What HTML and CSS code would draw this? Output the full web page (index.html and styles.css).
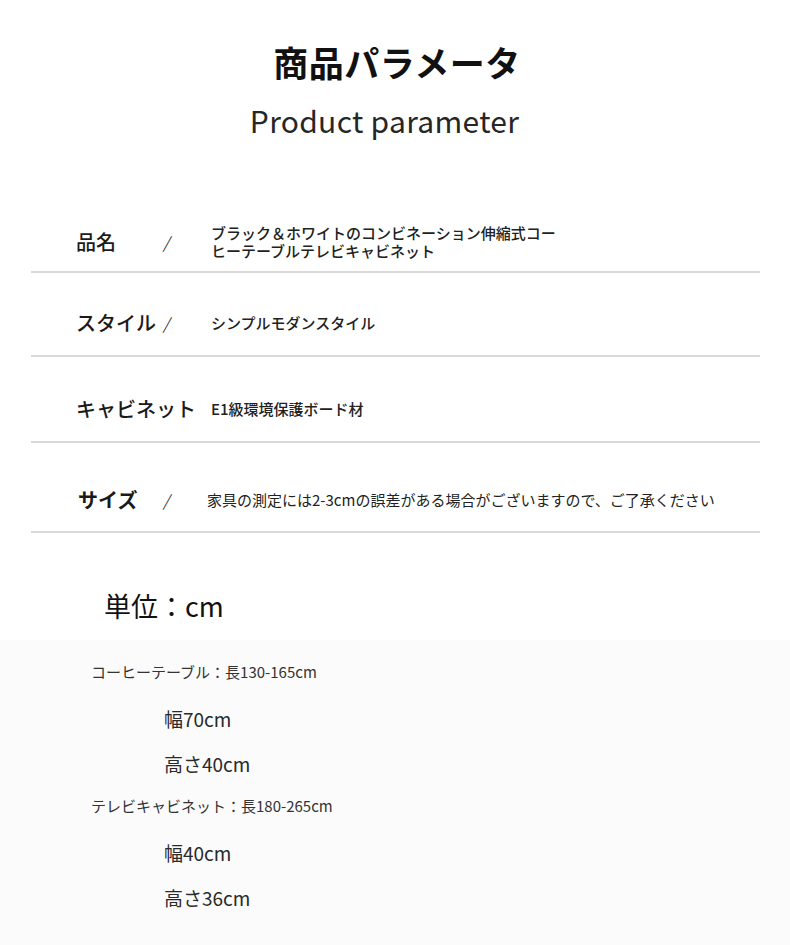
FILE: index.html
```html
<!DOCTYPE html>
<html lang="ja">
<head>
<meta charset="utf-8">
<title>商品パラメータ</title>
<link rel="stylesheet" href="styles.css">
</head>
<body>
<div class="page">
  <header class="header">
    <h1 class="title">商品パラメータ</h1>
    <p class="subtitle">Product parameter</p>
  </header>

  <section class="params">
    <div class="row row-1">
      <div class="label">品名</div>
      <div class="slash">/</div>
      <div class="value">ブラック＆ホワイトのコンビネーション伸縮式コー<br>ヒーテーブルテレビキャビネット</div>
    </div>
    <div class="row row-2">
      <div class="label">スタイル</div>
      <div class="slash">/</div>
      <div class="value">シンプルモダンスタイル</div>
    </div>
    <div class="row row-3">
      <div class="label label-wide">キャビネット</div>
      <div class="slash"></div>
      <div class="value">E1級環境保護ボード材</div>
    </div>
    <div class="row row-4">
      <div class="label label-size">サイズ</div>
      <div class="slash">/</div>
      <div class="value value-shift">家具の測定には2-3cmの誤差がある場合がございますので、ご了承ください</div>
    </div>
  </section>

  <h2 class="unit">単位：cm</h2>

  <section class="specs">
    <p class="name">コーヒーテーブル：長130-165cm</p>
    <p class="dim">幅70cm</p>
    <p class="dim">高さ40cm</p>
    <p class="name">テレビキャビネット：長180-265cm</p>
    <p class="dim">幅40cm</p>
    <p class="dim">高さ36cm</p>
  </section>
</div>
</body>
</html>
```

FILE: styles.css
```css
html, body {
  margin: 0;
  padding: 0;
  background: #ffffff;
}

body {
  font-family: "Noto Sans CJK JP", "Noto Sans", sans-serif;
  color: #1e1e1e;
  width: 790px;
  height: 945px;
  overflow: hidden;
}

.page {
  display: flex;
  flex-direction: column;
  height: 945px;
}

.header {
  display: flex;
  flex-direction: column;
  align-items: center;
  padding-top: 40px;
  padding-left: 4px;
}

.title {
  margin: 0;
  font-size: 35px;
  line-height: 44px;
  font-weight: 700;
  color: #111;
  letter-spacing: 0.5px;
}

.subtitle {
  margin: 16px 0 0;
  padding-right: 25px;
  font-size: 30px;
  line-height: 40px;
  font-weight: 400;
  color: #262626;
  letter-spacing: 0.3px;
}

.params {
  margin: 84px 30px 0 31px;
  display: flex;
  flex-direction: column;
}

.row {
  display: grid;
  grid-template-columns: 87px 48px 1fr;
  align-items: center;
  padding-left: 45px;
  padding-bottom: 18px;
  border-bottom: 2px solid #d9d9d9;
}

.row-1 { padding-top: 0; padding-bottom: 11px; }
.row-2 { padding-top: 36px; }
.row-3 { padding-top: 38px; }
.row-4 { padding-top: 43px; padding-bottom: 17px; }

.label {
  font-size: 20px;
  line-height: 28px;
  font-weight: 500;
  color: #1a1a1a;
  white-space: nowrap;
}

.label-size {
  padding-left: 2px;
  font-weight: 700;
}

.slash {
  font-size: 16px;
  line-height: 28px;
  color: #3a3a3a;
  font-style: italic;
  font-weight: 400;
}

.value {
  font-size: 15px;
  line-height: 18px;
  font-weight: 500;
  color: #222;
  white-space: nowrap;
}

.value-shift {
  margin-left: -4px;
  font-weight: 400;
}

.unit {
  margin: 55px 0 0 104px;
  font-size: 27px;
  line-height: 36px;
  font-weight: 400;
  color: #111;
}

.specs {
  flex: 1;
  margin-top: 16px;
  padding: 22px 0 0 91px;
  background: #fbfbfb;
}

.specs p {
  margin: 0;
}

.name {
  font-size: 15px;
  line-height: 20px;
  color: #333;
}

.dim {
  padding-left: 73px;
  font-size: 19px;
  line-height: 26px;
  color: #2a2a2a;
}

.name + .dim { margin-top: 24px; }
.dim + .dim { margin-top: 19px; }
.dim + .name { margin-top: 19px; }
```
